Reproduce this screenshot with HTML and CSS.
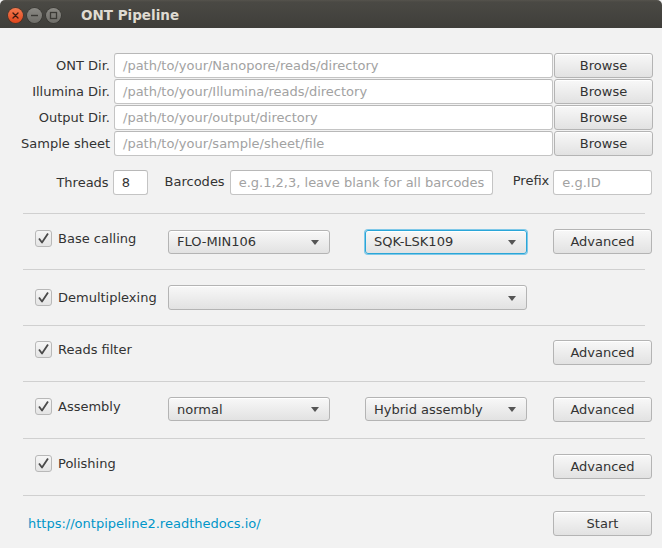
FILE: index.html
```html
<!DOCTYPE html>
<html>
<head>
<meta charset="utf-8">
<link rel="stylesheet" href="styles.css">
</head>
<body>
<div class="window">
  <div class="titlebar">
    <div class="wbtns">
      <span class="wb close"><svg width="15" height="15" viewBox="0 0 15 15"><path d="M5 5 L10 10 M10 5 L5 10" stroke="#3a1a10" stroke-width="1.3" stroke-linecap="round"/></svg></span>
      <span class="wb"><svg width="15" height="15" viewBox="0 0 15 15"><path d="M4 7.5 H11" stroke="#3a3935" stroke-width="1.4"/></svg></span>
      <span class="wb"><svg width="15" height="15" viewBox="0 0 15 15"><rect x="4.5" y="4.5" width="6" height="6" fill="none" stroke="#3a3935" stroke-width="1.3"/></svg></span>
    </div>
    <div class="title">ONT Pipeline</div>
  </div>

  <div class="main">
    <div class="paths">
      <label class="plabel">ONT Dir.</label>
      <div class="field ph">/path/to/your/Nanopore/reads/directory</div>
      <button class="btn">Browse</button>
      <label class="plabel">Illumina Dir.</label>
      <div class="field ph">/path/to/your/Illumina/reads/directory</div>
      <button class="btn">Browse</button>
      <label class="plabel">Output Dir.</label>
      <div class="field ph">/path/to/your/output/directory</div>
      <button class="btn">Browse</button>
      <label class="plabel">Sample sheet</label>
      <div class="field ph">/path/to/your/sample/sheet/file</div>
      <button class="btn">Browse</button>
    </div>

    <div class="opts">
      <label class="olabel first">Threads</label>
      <div class="field threads">8</div>
      <label class="olabel barl">Barcodes</label>
      <div class="field ph barcodes">e.g.1,2,3, leave blank for all barcodes</div>
      <label class="olabel prefl">Prefix</label>
      <div class="field ph prefix">e.g.ID</div>
    </div>

    <div class="sep"></div>

    <div class="section">
      <div class="check up"><span class="box"><svg width="17" height="17" viewBox="0 0 17 17"><path d="M4 8.5 L7 12.5 L13 3.5" fill="none" stroke="#4a4a4a" stroke-width="1.8" stroke-linejoin="round"/></svg></span>Base calling</div>
      <div class="combo">FLO-MIN106<span class="arrow"></span></div>
      <div class="combo focus">SQK-LSK109<span class="arrow"></span></div>
      <button class="btn">Advanced</button>
    </div>
    <div class="sep"></div>

    <div class="section">
      <div class="check"><span class="box"><svg width="17" height="17" viewBox="0 0 17 17"><path d="M4 8.5 L7 12.5 L13 3.5" fill="none" stroke="#4a4a4a" stroke-width="1.8" stroke-linejoin="round"/></svg></span>Demultiplexing</div>
      <div class="combo wide"><span class="arrow"></span></div>
    </div>
    <div class="sep"></div>

    <div class="section short">
      <div class="check up"><span class="box"><svg width="17" height="17" viewBox="0 0 17 17"><path d="M4 8.5 L7 12.5 L13 3.5" fill="none" stroke="#4a4a4a" stroke-width="1.8" stroke-linejoin="round"/></svg></span>Reads filter</div>
      <button class="btn c4">Advanced</button>
    </div>
    <div class="sep"></div>

    <div class="section tall">
      <div class="check up"><span class="box"><svg width="17" height="17" viewBox="0 0 17 17"><path d="M4 8.5 L7 12.5 L13 3.5" fill="none" stroke="#4a4a4a" stroke-width="1.8" stroke-linejoin="round"/></svg></span>Assembly</div>
      <div class="combo">normal<span class="arrow"></span></div>
      <div class="combo">Hybrid assembly<span class="arrow"></span></div>
      <button class="btn">Advanced</button>
    </div>
    <div class="sep"></div>

    <div class="section tall">
      <div class="check up"><span class="box"><svg width="17" height="17" viewBox="0 0 17 17"><path d="M4 8.5 L7 12.5 L13 3.5" fill="none" stroke="#4a4a4a" stroke-width="1.8" stroke-linejoin="round"/></svg></span>Polishing</div>
      <button class="btn c4">Advanced</button>
    </div>
    <div class="sep"></div>

    <div class="footer">
      <a class="link" href="#">https://ontpipeline2.readthedocs.io/</a>
      <button class="btn">Start</button>
    </div>
  </div>
</div>
</body>
</html>
```
FILE: styles.css
```css
* { box-sizing: border-box; }
html, body { margin: 0; padding: 0; background: #f2f2f2; }
body { font-family: "DejaVu Sans", sans-serif; font-size: 13px; color: #333; }

.window { width: 662px; height: 548px; background: #f2f2f2; overflow: hidden; }

.titlebar {
  height: 28px;
  background: linear-gradient(#55534d 0px, #4a4944 2px, #3f3e3a 100%);
  border-radius: 5px 5px 0 0;
  display: flex;
  align-items: center;
  padding-left: 8px;
}
.wbtns { display: flex; gap: 4px; margin-top: 3px; }
.wb {
  width: 15px; height: 15px; border-radius: 50%;
  background: linear-gradient(#8a8984, #6f6e69);
  box-shadow: 0 0 0 0.5px #33322e;
  display: block;
}
.wb svg { display: block; }
.wb.close { background: linear-gradient(#f37a4f, #e0451b); box-shadow: 0 0 0 0.5px #5a2a18; }
.title {
  margin-left: 20px;
  margin-top: 2px;
  font-family: "DejaVu Sans", sans-serif;
  font-weight: bold;
  font-size: 13.5px;
  color: #dfdbd2;
}

.main { padding: 25px 10px 0 10px; }

.paths {
  display: grid;
  grid-template-columns: 103px 439px 99px;
  column-gap: 1px;
  row-gap: 1px;
  align-items: center;
}
.plabel { text-align: right; padding-right: 3px; white-space: nowrap; }

.field {
  height: 25px;
  background: #fff;
  border: 1px solid #c4c4c4;
  border-top-color: #b8b8b8;
  border-radius: 3px;
  padding: 0 8px;
  display: flex;
  align-items: center;
  white-space: nowrap;
  overflow: hidden;
  color: #333;
}
.field.ph { color: #a2a2a2; }

.btn {
  height: 25px;
  font-family: "DejaVu Sans", sans-serif;
  font-size: 13px;
  color: #333;
  border: 1px solid #b4b4b4;
  border-radius: 3px;
  background: linear-gradient(#f8f8f8, #e2e2e2);
  box-shadow: inset 0 1px 0 #fff;
  padding: 0;
  width: 99px;
}

.opts {
  display: flex;
  align-items: center;
  margin-top: 14px;
}
.olabel { white-space: nowrap; }
.olabel.first { width: 99px; text-align: right; margin-top: -1px; }
.threads { width: 35px; margin-left: 4px; }
.barl { margin-left: 17px; margin-top: -2px; }
.barcodes { width: 264px; margin-left: 5px; }
.prefl { margin-left: 20px; margin-top: -4px; }
.prefix { width: 99px; margin-left: 4px; }

.sep { height: 1px; background: #d0d0d0; margin: 0 7px 0 13px; }
.opts + .sep { margin-top: 18px; }

.section {
  height: 55px;
  display: grid;
  grid-template-columns: 133px 197px 188px 99px;
  align-items: center;
  padding-left: 25px;
}
.section.short { padding-bottom: 2px; }
.section.tall { height: 56px; padding-bottom: 2px; }

.check { display: flex; align-items: center; grid-column: 1; white-space: nowrap; }
.check.up { margin-bottom: 7px; }
.section.tall .check.up { margin-bottom: 5px; }
.box {
  width: 17px; height: 17px;
  border: 1px solid #b8b8b8;
  border-radius: 3px;
  background: linear-gradient(#f6f6f6, #e4e4e4);
  margin-right: 6px;
  position: relative;
  display: block;
}
.box svg { position: absolute; left: -1px; top: -1px; }

.combo {
  width: 162px;
  height: 24px;
  border: 1px solid #b4b4b4;
  border-radius: 3px;
  background: linear-gradient(#f8f8f8, #e2e2e2);
  box-shadow: inset 0 1px 0 #fff;
  display: flex;
  align-items: center;
  padding-left: 8px;
  position: relative;
  white-space: nowrap;
}
.combo.focus { border-color: #2aa6d8; box-shadow: 0 0 0 1px #7fc8e8, inset 0 1px 0 #fff; }
.combo.wide { width: 359px; grid-column: 2 / span 2; height: 25px; }
.arrow {
  position: absolute;
  right: 10px;
  top: 50%;
  margin-top: -2px;
  width: 0; height: 0;
  border-left: 4px solid transparent;
  border-right: 4px solid transparent;
  border-top: 5px solid #555;
}
.section .btn { height: 25px; }
.btn.c4 { grid-column: 4; }

.footer {
  height: 56px;
  display: flex;
  align-items: center;
  justify-content: space-between;
  padding-left: 18px;
  padding-bottom: 1px;
}
.link { color: #0096c9; text-decoration: none; }
```
